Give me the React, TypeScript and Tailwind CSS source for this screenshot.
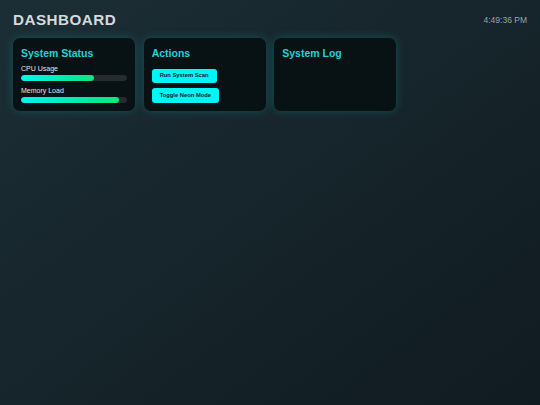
import React from "react";

function Bar({ pct }: { pct: number }) {
  return (
    <div className="h-[6px] w-full rounded-full bg-[#262b2d] overflow-hidden">
      <div
        className="h-full rounded-full bg-gradient-to-r from-[#00f5f0] to-[#10e57a]"
        style={{ width: `${pct}%` }}
      />
    </div>
  );
}

function Card({ title, children }: { title: string; children?: React.ReactNode }) {
  return (
    <div className="h-[73px] rounded-[7px] bg-[#081114] px-[8px] pt-[7.5px] shadow-[0_0_10px_rgba(0,210,210,0.25)]">
      <h2 className="text-[10.5px] leading-[14px] font-bold text-[#1fd3d6]">{title}</h2>
      {children}
    </div>
  );
}

export default function App() {
  return (
    <div
      className="min-h-[405px] w-full bg-gradient-to-br from-[#1c2e35] to-[#101b21] px-[13px] pt-[10px]"
      style={{ fontFamily: '"Liberation Sans", Arial, sans-serif' }}
    >
      <div className="flex items-center justify-between h-[20px]">
        <h1 className="text-[15.2px] font-bold tracking-[0.5px] text-[#d4dade]">DASHBOARD</h1>
        <span className="text-[8.5px] text-[#9aa3a8]">4:49:36 PM</span>
      </div>
      <div className="mt-[8px] grid grid-cols-4 gap-[8.5px]">
        <Card title="System Status">
          <div className="mt-[4px] text-[7px] leading-[9px] text-[#e4e8ea]">CPU Usage</div>
          <div className="mt-[2px]"><Bar pct={69} /></div>
          <div className="mt-[5px] text-[7px] leading-[9px] text-[#e4e8ea]">Memory Load</div>
          <div className="mt-[2px]"><Bar pct={92} /></div>
        </Card>
        <Card title="Actions">
          <div className="mt-[9px] flex flex-col items-start gap-[5px]">
            <button className="h-[14.5px] rounded-[3px] bg-[#00f6f6] px-[8px] text-[5.8px] font-bold text-[#0c1a1c]">
              Run System Scan
            </button>
            <button className="h-[14.5px] rounded-[3px] bg-[#00f6f6] px-[8px] text-[5.8px] font-bold text-[#0c1a1c]">
              Toggle Neon Mode
            </button>
          </div>
        </Card>
        <Card title="System Log" />
      </div>
    </div>
  );
}
